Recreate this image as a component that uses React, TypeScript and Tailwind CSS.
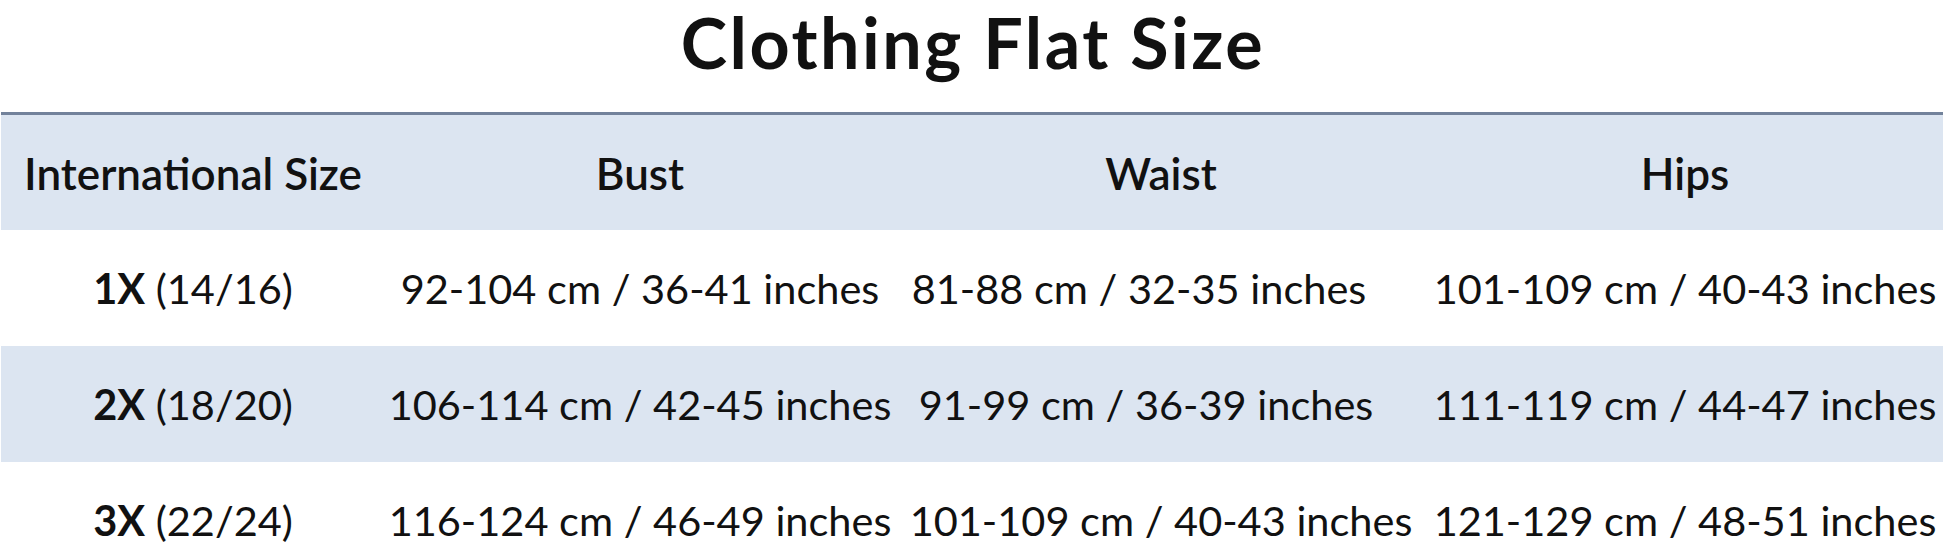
import React from "react";

const rows = [
  { size: "1X", sub: "(14/16)", bust: "92-104 cm / 36-41 inches", waist: "81-88 cm / 32-35 inches", hips: "101-109 cm / 40-43 inches", shaded: false, waistPad: "pr-[44px]" },
  { size: "2X", sub: "(18/20)", bust: "106-114 cm / 42-45 inches", waist: "91-99 cm / 36-39 inches", hips: "111-119 cm / 44-47 inches", shaded: true, waistPad: "pr-[30px]" },
  { size: "3X", sub: "(22/24)", bust: "116-124 cm / 46-49 inches", waist: "101-109 cm / 40-43 inches", hips: "121-129 cm / 48-51 inches", shaded: false, waistPad: "" },
];

export default function App() {
  return (
    <div
      className="w-[1946px] h-[548px] overflow-hidden bg-white text-[#111]"
      style={{ fontFamily: "Lato, 'Open Sans', sans-serif" }}
    >
      <div className="h-[112px] flex justify-center">
        <h1 className="text-[70px] leading-[84px] font-bold tracking-[2.5px]">Clothing Flat Size</h1>
      </div>
      <div className="ml-[1px] w-[1942px]">
        <div className="grid grid-cols-[384px_510px_532px_1fr] h-[118px] bg-[#dce5f1] border-t-[3px] border-[#72829b] items-center text-[44px] font-semibold">
          <div className="text-center whitespace-nowrap">International Size</div>
          <div className="text-center">Bust</div>
          <div className="text-center">Waist</div>
          <div className="text-center">Hips</div>
        </div>
        {rows.map((r) => (
          <div
            key={r.size}
            className={
              "grid grid-cols-[384px_510px_532px_1fr] h-[116px] items-center text-[41.5px] " +
              (r.shaded ? "bg-[#dce5f1]" : "bg-white")
            }
          >
            <div className="text-center whitespace-nowrap">
              <span className="font-bold">{r.size}</span> <span>{r.sub}</span>
            </div>
            <div className="text-center whitespace-nowrap">{r.bust}</div>
            <div className={"text-center whitespace-nowrap " + r.waistPad}>{r.waist}</div>
            <div className="text-center whitespace-nowrap">{r.hips}</div>
          </div>
        ))}
      </div>
    </div>
  );
}
